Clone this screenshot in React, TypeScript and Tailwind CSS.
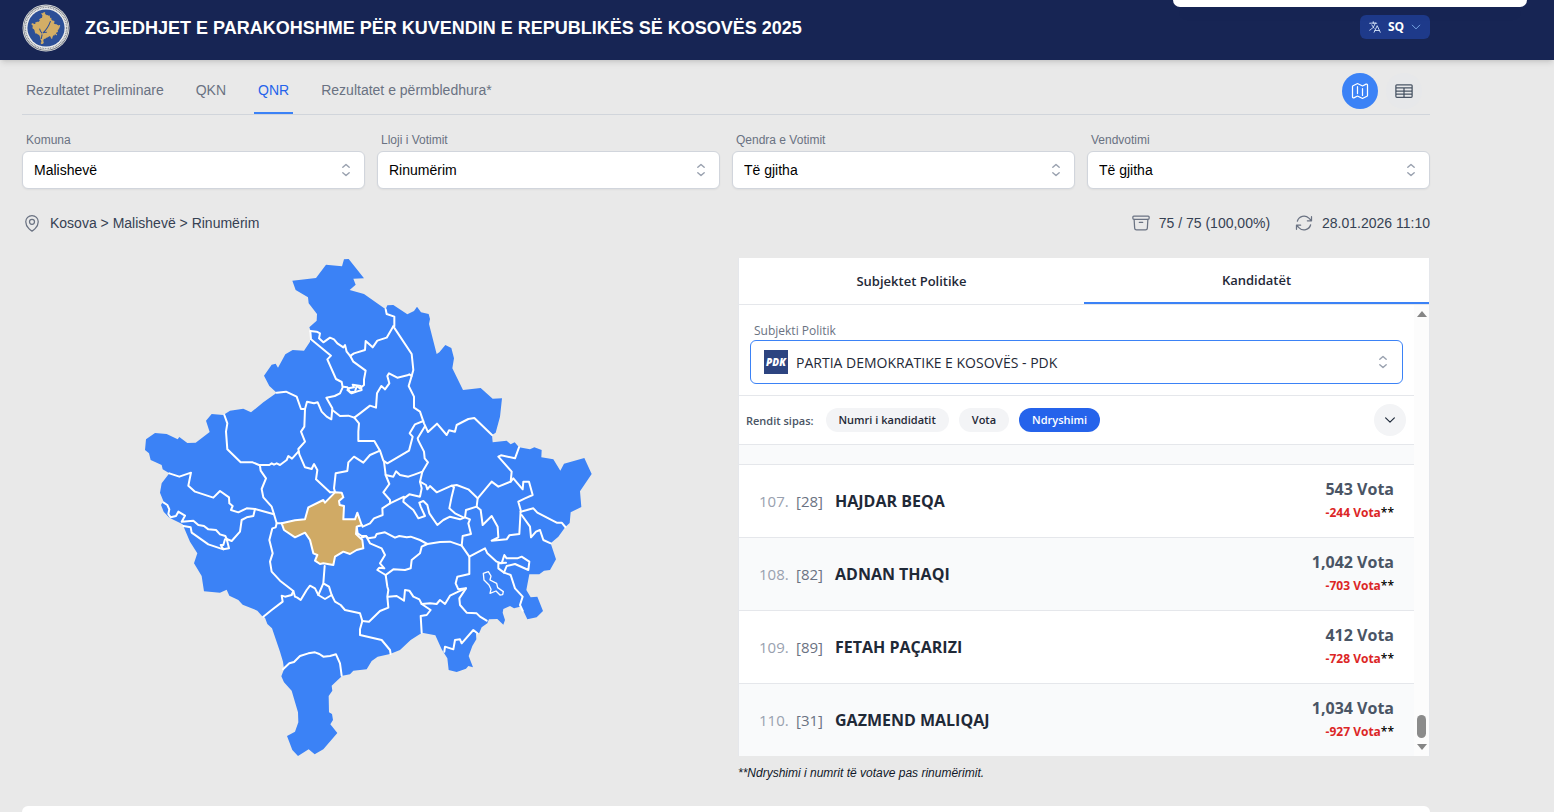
import React, { ReactNode, useState } from "react";
import {
  HiOutlineArchiveBox,
  HiOutlineArrowPath,
  HiOutlineChevronDown,
  HiOutlineLanguage,
  HiOutlineMap,
  HiOutlineMapPin,
  HiOutlineTableCells,
} from "react-icons/hi2";
import clsx from "clsx";

const OUTLINE =
  "M487 92L558 84L588 44L636 49L642 28L656 27L702 85L670 86L677 104L659 120L702 132L767 178L772 166L790 165L832 193L852 183L861 170L873 187L896 192L900 207L897 222L920 312L928 307L946 285L964 294L972 325L967 355L999 420L1052 414L1088 446L1116 445L1110 500L1097 548L1086 555L1088 577L1130 572L1142 583L1154 577L1167 592L1200 598L1213 592L1235 600L1234 622L1270 628L1291 662L1302 641L1363 624L1385 672L1350 724L1354 771L1322 787L1319 819L1306 831L1285 860L1262 880L1278 928L1260 960L1242 962L1228 973L1198 973L1189 1020L1202 1042L1222 1040L1239 1083L1220 1102L1192 1108L1180 1082L1170 1070L1152 1075L1140 1068L1120 1077L1118 1088L1125 1110L1120 1124L1102 1107L1077 1108L1072 1120L1055 1132L1048 1148L1038 1152L1039 1168L1027 1188L1016 1218L1029 1252L1015 1248L1008 1256L980 1266L956 1260L952 1225L935 1198L916 1156L876 1148L842 1170L810 1200L780 1212L743 1220L725 1233L710 1258L670 1262L660 1273L637 1277L620 1293L605 1307L607 1322L596 1338L597 1387L606 1392L609 1410L601 1423L622 1449L580 1498L554 1513L536 1498L504 1518L487 1500L471 1458L495 1445L505 1417L504 1387L485 1322L462 1297L454 1279L462 1258L459 1235L450 1205L438 1170L426 1135L412 1122L405 1103L396 1098L382 1082L338 1064L325 1050L298 1037L290 1019L270 1028L222 1024L218 998L215 978L192 940L202 910L180 875L165 840L158 823L118 803L101 785L93 765L100 753L90 728L95 700L118 670L98 658L95 645L62 630L57 610L45 600L48 568L75 549L110 552L143 568L148 561L172 579L197 578L239 546L228 512L245 492L280 495L300 482L340 476L363 487L400 457L435 432L440 428L418 408L402 377L425 344L437 341L444 353L466 313L488 300L522 302L540 275L541 240L538 232L560 212L561 192L536 160L534 142L497 120Z";

const MALISHEVE =
  "M455 820L495 811L525 808L535 772L580 750L585 758L615 727L635 728L640 742L627 753L629 765L642 768L640 808L675 808L682 788L695 825L680 830L678 852L697 870L700 895L680 900L660 912L640 905L615 920L610 945L580 940L570 942L555 932L562 915L550 910L540 870L525 848L495 862L462 840Z";

const BORDERS = [
  "M541 243L543 268L603 317L592 328L618 387L635 396L638 412L630 430L614 438L589 443L607 475L604 508L590 500L575 485L563 457L552 460L531 455L525 477L513 477L500 440L468 425L440 428",
  "M541 243L560 245L570 250L567 265L580 277L600 263L612 268L622 280L640 292L645 285L650 305L662 320",
  "M662 317L672 310L705 300L707 273L728 292L742 272L770 263L790 229",
  "M767 178L770 192L793 200L793 229L790 229L845 312L850 360L845 378L836 408L852 440L852 473L870 485L882 520L894 546L921 521L950 555L957 541L975 545L980 525L1015 507L1033 504L1086 555",
  "M845 378L838 373L832 376L802 383L777 370L772 378L778 400L765 418L754 408L741 430L738 473L720 467L690 490L673 503L655 497L630 498L607 480",
  "M662 320L670 335L707 362L702 388L702 405L690 415L680 408L675 425L660 427L652 412L640 410",
  "M652 420L665 430L682 424L695 420L692 408L668 404L672 412L655 415",
  "M673 503L687 520L685 545L685 573L733 573L750 602L760 632L772 640L837 602L848 560L839 550L855 523L880 513",
  "M884 530L863 565L865 572L882 605L884 625L894 637L877 665L855 673L835 680L810 675L798 664L790 680L767 675L762 635",
  "M767 675L778 702L760 727L780 750L780 760L822 740L820 755L835 768L850 780L865 805L885 798L872 770L868 758L880 753L892 765L898 790L922 825L940 810L960 800L990 808L1005 802L1008 780L1040 770L1043 745L1085 695L1105 710L1142 695L1145 665L1105 620L1113 616L1155 625L1167 592",
  "M877 665L870 695L888 705L892 718L900 708L920 727L965 707L972 712L965 740L958 775L975 790L1000 802",
  "M965 707L980 705L1015 718L1043 745",
  "M870 695L875 715L870 740L838 733L822 745",
  "M780 760L757 775L758 795L732 805L720 820L698 830L695 825",
  "M600 727L558 688L562 660L552 642L545 657L525 652L508 613L505 597L525 575L513 545L523 530L525 477",
  "M600 727L615 727L612 715L617 670L652 663L655 637L672 620L700 638L720 615L750 602",
  "M505 605L486 626L475 618L470 630L450 645L440 640L432 644L425 640L418 645L387 645L368 637L332 637L292 598L288 545L292 520L283 495",
  "M390 648L392 662L408 685L395 717L400 742L425 770L432 793L440 820L457 820",
  "M118 670L148 680L183 668L175 707L195 725L250 743L270 723L297 742L298 760L308 768L303 780L325 787L350 775L375 777L432 793",
  "M375 777L370 798L350 802L335 810L330 845L305 873L290 867L286 858L270 853L258 840L235 838L222 828L205 825L190 812L155 815L165 797L145 785L138 798L122 802L115 792L118 778L112 765L100 757",
  "M160 828L182 832L185 848L235 883L280 898L297 895L290 867M285 868L280 885L272 885L280 898",
  "M440 820L437 832L427 835L418 870L428 910L420 935L425 965L450 992L490 1023L485 1035L465 1040L455 1037L458 1055L425 1080L400 1100",
  "M490 1023L495 1040L502 1043L512 1050L530 1020L540 1007L555 1015L565 1035L585 1047L605 1035L615 1055L632 1065L645 1080L690 1090L697 1113L690 1138L690 1155L755 1170L780 1200L782 1212",
  "M584 948L580 1000L565 1035M580 1000L597 1010L605 1035",
  "M697 1113L717 1115L750 1083L775 1073L772 1040L775 1020L772 1010L767 975L742 960L748 953L763 955L750 940L765 915L755 895L720 880L708 858L690 865",
  "M695 825L680 830L683 850L695 858L708 858L715 865L735 862L740 852L765 847L795 863L808 858L830 862L842 860L870 870L892 882L930 876L960 875L995 887L998 858L1023 852L1015 820L1020 808L1005 802",
  "M892 882L875 890L870 910L845 930L842 955L825 960L790 958L767 975",
  "M995 887L1018 920L1018 972L982 980L977 1000L985 1018L1008 1015L988 1045L990 1065L1010 1088L1040 1090L1050 1100L1070 1112",
  "M775 1040L800 1038L822 1052L825 1020L838 1022L850 1040L868 1048L875 1062L900 1060L920 1062L930 1050L945 1062L960 1037L985 1025L1008 1015",
  "M875 1062L902 1080L890 1095L872 1098L875 1148",
  "M943 1205L945 1190L970 1198L975 1170L990 1168L995 1180L1030 1140L1042 1150",
  "M1018 920L1065 895L1072 910L1100 935L1115 940L1123 915L1130 925L1162 925L1175 920L1198 935L1195 960L1155 942L1130 948L1122 968L1105 955L1105 940L1128 938",
  "M1122 968L1142 975L1155 1015L1178 1040L1170 1065L1178 1082",
  "M1040 770L1052 780L1058 825L1085 798L1103 830L1105 862L1085 872L1130 868L1138 856L1168 852L1172 780L1165 755L1185 745L1208 735L1197 695L1180 695L1178 718L1150 685L1142 695",
  "M1172 785L1210 775L1222 788L1280 818L1295 818L1306 831",
  "M1175 795L1200 830L1203 862L1218 845L1230 840L1240 870L1262 880",
  "M459 1258L478 1240L492 1236L510 1218L535 1210L555 1207L568 1212L580 1220L600 1218L618 1213L630 1240L635 1277",
];

const ENCLAVE =
  "M1060 970L1075 965L1083 978L1080 990L1100 1000L1103 1013L1120 1025L1118 1034L1110 1035L1098 1023L1080 1030L1083 1018L1077 1005L1062 990Z";

const tabs = [
  "Rezultatet Preliminare",
  "QKN",
  "QNR",
  "Rezultatet e përmbledhura*",
];

const filters = [
  { id: "komuna", label: "Komuna", value: "Malishevë" },
  { id: "lloji", label: "Lloji i Votimit", value: "Rinumërim" },
  { id: "qendra", label: "Qendra e Votimit", value: "Të gjitha" },
  { id: "vendvotimi", label: "Vendvotimi", value: "Të gjitha" },
];

const candidates = [
  { rank: 107, no: 28, name: "HAJDAR BEQA", votes: "543", diff: "-244" },
  { rank: 108, no: 82, name: "ADNAN THAQI", votes: "1,042", diff: "-703" },
  { rank: 109, no: 89, name: "FETAH PAÇARIZI", votes: "412", diff: "-728" },
  { rank: 110, no: 31, name: "GAZMEND MALIQAJ", votes: "1,034", diff: "-927" },
];

const sortOptions = ["Numri i kandidatit", "Vota", "Ndryshimi"];

const UpDownIcon = () => (
  <svg
    viewBox="0 0 20 20"
    className="pointer-events-none size-5 shrink-0 text-gray-400"
    fill="none"
    stroke="currentColor"
    strokeWidth="1.4"
    strokeLinecap="round"
    strokeLinejoin="round"
  >
    <path d="M6.8 7.3L10 4.4l3.2 2.9M6.8 12.7L10 15.6l3.2-2.9" />
  </svg>
);

const Emblem = () => (
  <svg viewBox="0 0 48 48" className="size-12 shrink-0">
    <circle cx="24" cy="24" r="23.5" fill="#d9dbdc" />
    <circle cx="24" cy="24" r="22.6" fill="#5d6470" />
    <circle cx="24" cy="24" r="22" fill="#eceded" />
    <circle
      cx="24"
      cy="24"
      r="20.6"
      fill="none"
      stroke="#8b9097"
      strokeWidth="1.4"
      strokeDasharray="1 .7"
    />
    <circle cx="24" cy="24" r="18.6" fill="#2c4f97" />
    <g transform="translate(8.5 7.5) scale(.0215)">
      <path d={OUTLINE} fill="#d3ae66" />
      <path
        d="M930 450Q820 780 580 1000M540 1060L500 1280M540 1020Q450 930 420 800M620 980L760 960"
        fill="none"
        stroke="#2c4f97"
        strokeWidth="48"
      />
    </g>
  </svg>
);

const KosovoMap = () => (
  <svg
    viewBox="0 24 1428 1500"
    className="w-[476px] max-w-full"
    role="img"
    aria-label="Harta e Kosovës"
  >
    <path d={OUTLINE} fill="#3b82f6" />
    <g
      fill="none"
      stroke="#fff"
      strokeWidth="6"
      strokeLinejoin="round"
      strokeLinecap="round"
    >
      {BORDERS.map((d) => (
        <path key={d} d={d} />
      ))}
      <path d={MALISHEVE} fill="#d0aa65" />
      <path d={ENCLAVE} strokeWidth="4" />
    </g>
  </svg>
);

type FilterProps = {
  id: string;
  label: string;
  value: string;
};

const FilterSelect = ({ id, label, value }: FilterProps) => (
  <div className="flex flex-col">
    <label htmlFor={id} className="px-1 text-xs leading-4 text-gray-500">
      {label}
    </label>
    <div className="mt-[3px] flex h-[38px] items-center rounded-md border border-gray-300 bg-white pr-2 shadow-xs">
      <select
        id={id}
        className="-mr-5 h-full flex-1 appearance-none bg-transparent pl-[11px] text-sm text-black outline-none"
      >
        <option>{value}</option>
      </select>
      <UpDownIcon />
    </div>
  </div>
);

const Info = ({ icon, children }: { icon: ReactNode; children: ReactNode }) => (
  <div className="flex items-center gap-2 text-sm text-gray-700">
    {icon}
    <span>{children}</span>
  </div>
);

const App = () => {
  const [tab, setTab] = useState("QNR");
  const [sort, setSort] = useState("Ndryshimi");

  return (
    <div className="flex min-h-screen flex-col overflow-hidden bg-[#e9e9e9] font-['Liberation_Sans',Arial,sans-serif]">
      <div className="absolute top-0 right-[27px] h-[7px] w-[354px] rounded-b-lg bg-white shadow-lg" />

      <header className="flex h-[60px] items-center justify-between bg-[#172554] pr-[124px] pl-[22px] shadow-md">
        <div className="flex items-center gap-[15px] pb-1">
          <Emblem />
          <h1 className="text-lg font-bold text-white">
            ZGJEDHJET E PARAKOHSHME PËR KUVENDIN E REPUBLIKËS SË KOSOVËS 2025
          </h1>
        </div>
        <button className="mb-1.5 flex h-6 w-[70px] items-center justify-center gap-1.5 rounded-md bg-[#1e3a8a] font-['Open_Sans',sans-serif] text-xs font-bold text-white">
          <HiOutlineLanguage className="size-3.5 text-blue-100" />
          SQ
          <HiOutlineChevronDown className="size-3 text-[#93c5fd]" />
        </button>
      </header>

      <main className="flex flex-1 flex-col pr-[124px] pl-[22px]">
        <div className="flex h-[55px] items-end justify-between border-b border-[#d1d5db]">
          <nav className="flex gap-6">
            {tabs.map((t) => (
              <button
                key={t}
                onClick={() => setTab(t)}
                className={clsx(
                  "border-b-2 px-1 pb-3 text-sm leading-5",
                  t === tab
                    ? "border-[#3b82f6] text-[#2563eb]"
                    : "border-transparent text-gray-500"
                )}
              >
                {t}
              </button>
            ))}
          </nav>
          <div className="flex gap-2 pr-2 pb-[5px]">
            <button
              aria-label="Harta"
              className="flex size-9 items-center justify-center rounded-full bg-[#3b82f6] text-white"
            >
              <HiOutlineMap className="size-5" />
            </button>
            <button
              aria-label="Tabela"
              className="flex size-9 items-center justify-center rounded-full bg-[#e7e8ea] text-gray-600"
            >
              <HiOutlineTableCells className="size-5" />
            </button>
          </div>
        </div>

        <div className="mt-[17px] grid grid-cols-4 gap-3">
          {filters.map((f) => (
            <FilterSelect key={f.id} {...f} />
          ))}
        </div>

        <div className="mt-6 flex h-5 items-center justify-between">
          <Info icon={<HiOutlineMapPin className="size-5 text-gray-500" />}>
            Kosova &gt; Malishevë &gt; Rinumërim
          </Info>
          <div className="flex gap-6">
            <Info
              icon={<HiOutlineArchiveBox className="size-5 text-gray-500" />}
            >
              75 / 75 (100,00%)
            </Info>
            <Info
              icon={<HiOutlineArrowPath className="size-5 text-gray-500" />}
            >
              28.01.2026 11:10
            </Info>
          </div>
        </div>

        <div className="mt-[25px] grid grid-cols-2 gap-6">
          <div className="flex items-start justify-center">
            <KosovoMap />
          </div>

          <div>
            <section className="border-x border-gray-200 bg-white font-['Open_Sans','Noto_Sans',sans-serif]">
              <div className="flex h-[47px] border-b border-gray-200 text-[13px] font-semibold text-[#1f2937]">
                <button className="flex-1 pt-0.5">Subjektet Politike</button>
                <button className="flex-1 border-b-2 border-[#3b82f6] pt-0.5">
                  Kandidatët
                </button>
              </div>

              <div className="flex">
                <div className="min-w-0 flex-1">
                  <div className="border-b border-gray-200 px-[11px] pt-[17px] pb-[11px]">
                    <label
                      htmlFor="subjekti"
                      className="block px-1 pb-px text-xs leading-[17px] text-gray-500"
                    >
                      Subjekti Politik
                    </label>
                    <div className="flex h-11 items-center rounded-md border border-[#3b82f6] pr-[9px] pl-[13px]">
                      <span className="flex size-6 shrink-0 items-center justify-center bg-[#2d4480] text-[10px] font-extrabold text-white italic">
                        PDK
                      </span>
                      <select
                        id="subjekti"
                        className="-mr-5 h-full flex-1 appearance-none bg-transparent pt-px pl-2 text-sm font-medium text-[#1f2937] outline-none"
                      >
                        <option>PARTIA DEMOKRATIKE E KOSOVËS - PDK</option>
                      </select>
                      <UpDownIcon />
                    </div>
                  </div>

                  <div className="flex h-[49px] items-center border-b border-gray-200 pr-2 pl-[7px] text-[11px] font-semibold">
                    <span className="pt-0.5 text-gray-600">Rendit sipas:</span>
                    <div className="ml-3 flex gap-2.5">
                      {sortOptions.map((s) => (
                        <button
                          key={s}
                          onClick={() => setSort(s)}
                          className={clsx(
                            "h-6 rounded-full px-[13px] pt-px",
                            s === sort
                              ? "bg-[#2563eb] text-white"
                              : "bg-gray-100 text-[#1f2937]"
                          )}
                        >
                          {s}
                        </button>
                      ))}
                    </div>
                    <button
                      aria-label="Hap"
                      className="ml-auto flex size-8 items-center justify-center rounded-full bg-gray-100 text-gray-800"
                    >
                      <HiOutlineChevronDown className="size-3.5" strokeWidth={2} />
                    </button>
                  </div>

                  <div className="h-5 border-b border-gray-200 bg-gray-50" />
                  <ol>
                    {candidates.map((c) => (
                      <li
                        key={c.rank}
                        className="flex items-center border-b border-gray-200 px-5 py-3 last:border-b-0 even:bg-gray-50"
                      >
                        <span className="w-[37px] text-[15px] text-gray-400">
                          {c.rank}.
                        </span>
                        <span className="w-[39px] text-[15px] text-gray-500">
                          [{c.no}]
                        </span>
                        <span className="text-base font-bold text-[#1f2937]">
                          {c.name}
                        </span>
                        <div className="ml-auto text-right">
                          <p className="text-base leading-6 font-bold text-gray-600">
                            {c.votes} Vota
                          </p>
                          <p className="text-xs leading-6 font-bold text-[#dc2626]">
                            {c.diff} Vota
                            <span className="font-semibold text-black">**</span>
                          </p>
                        </div>
                      </li>
                    ))}
                  </ol>
                </div>

                <div className="flex w-[15px] flex-col items-center justify-between bg-[#fcfcfc] py-1.5">
                  <svg viewBox="0 0 10 6" className="h-1.5 w-2.5">
                    <path d="M0 6L5 0l5 6z" fill="#858585" />
                  </svg>
                  <div className="flex flex-col items-center gap-1.5">
                    <div className="h-[23px] w-[9px] rounded-full bg-[#8b8b8b]" />
                    <svg viewBox="0 0 10 6" className="h-1.5 w-2.5">
                      <path d="M0 0h10L5 6z" fill="#858585" />
                    </svg>
                  </div>
                </div>
              </div>
            </section>
            <p className="mt-2 text-xs leading-[18px] text-gray-900 italic">
              **Ndryshimi i numrit të votave pas rinumërimit.
            </p>
          </div>
        </div>

        <div className="mt-6 min-h-1.5 flex-1 rounded-t-lg bg-white" />
      </main>
    </div>
  );
};

export default App;
